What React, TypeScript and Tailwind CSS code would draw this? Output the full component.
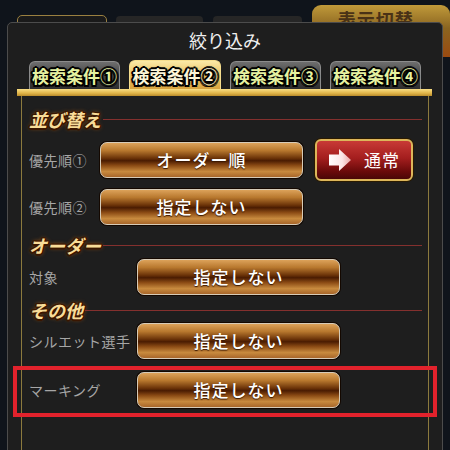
import React from "react";

const jp = "font-['Noto_Sans_CJK_JP','Noto_Sans',sans-serif]";

const tabOutline =
  "[text-shadow:-2px_0_0_#000,2px_0_0_#000,0_-2px_0_#000,0_2px_0_#000,-1.5px_-1.5px_0_#000,1.5px_-1.5px_0_#000,-1.5px_1.5px_0_#000,1.5px_1.5px_0_#000,0_0_3px_#000]";

const headOutline =
  "[text-shadow:-1.5px_0_0_#3a1600,1.5px_0_0_#3a1600,0_-1.5px_0_#3a1600,0_1.5px_0_#3a1600,-1px_-1px_0_#3a1600,1px_-1px_0_#3a1600,-1px_1px_0_#3a1600,1px_1px_0_#3a1600,0_0_4px_#c86a10]";

const tabs = ["検索条件①", "検索条件②", "検索条件③", "検索条件④"];

const GoldButton = ({ label }: { label: string }) => (
  <div className="w-[203px] h-[36px] rounded-[7px] border-[1.5px] border-[#d6cbb8] shadow-[0_0_0_1px_#140800] bg-[linear-gradient(to_bottom,#dca25a_0%,#b8782e_22%,#6a3208_45%,#4a1c02_52%,#8a4a14_66%,#c88a3e_84%,#a8662a_100%)] flex items-center justify-center">
    <span className={`${jp} font-medium text-[17px] text-white tracking-[1px] [text-shadow:0_1px_1px_#3a1800]`}>
      {label}
    </span>
  </div>
);

const SectionHead = ({ title, className }: { title: string; className?: string }) => (
  <div className={`flex items-center h-[20px] ${className ?? ""}`}>
    <span className={`${jp} italic font-bold text-[18px] text-[#f8dc98] ${headOutline} leading-none`}>
      {title}
    </span>
    <div className="flex-1 h-px bg-[#84302e] ml-[2px]" />
  </div>
);

const Row = ({
  label,
  labelW,
  children,
  className,
}: {
  label: string;
  labelW: string;
  children: React.ReactNode;
  className?: string;
}) => (
  <div className={`flex items-center ${className ?? ""}`}>
    <span className={`${jp} ${labelW} text-[14px] tracking-[0.5px] text-[#a6a6a6] shrink-0`}>
      {label}
    </span>
    {children}
  </div>
);

export default function App() {
  return (
    <div className="w-[450px] h-[450px] overflow-hidden bg-[#0f141b] relative">
      {/* tabs of the screen behind the panel */}
      <div className="flex items-start h-[22px]">
        <div className="ml-[17px] mt-[15px] w-[91px] h-[30px] rounded-t-[5px] border border-[#9a8040] bg-[#1a1a1a]" />
        <div className="ml-[9px] mt-[16px] w-[88px] h-[30px] rounded-t-[4px] bg-[#262626]" />
        <div className="ml-[10px] mt-[16px] w-[90px] h-[30px] rounded-t-[4px] bg-[#262626]" />
        <div className="ml-[10px] mt-[5px] w-[140px] h-[52px] rounded-t-[9px] bg-[linear-gradient(to_bottom,#c09a3a,#8a6420_45%,#9a4a10)] flex justify-center">
          <span className={`${jp} font-bold text-[18px] leading-none mt-[5px] ml-[-10px] text-[#4a3216] tracking-[1px]`}>
            表示切替
          </span>
        </div>
      </div>

      {/* filter panel */}
      <div className="relative z-10 ml-[7px] w-[436px] h-[440px] bg-[#1e1e1e] border border-[#4c4c4c] rounded-t-[5px]">
        <div className={`${jp} h-[34px] flex items-center justify-center text-[18px] text-[#efefef]`}>
          絞り込み
        </div>

        <div className="flex items-end gap-[9px] pl-[21px] h-[29px] mt-[3px]">
          {tabs.map((t, i) => (
            <div
              key={t}
              className={
                i === 1
                  ? "w-[92px] h-[29px] rounded-t-[6px] border border-b-0 border-[#f6de8e] bg-[linear-gradient(to_bottom,#fbe9a6,#e9c060_55%,#d8a440)] flex items-center justify-center"
                  : "w-[91px] h-[28px] rounded-t-[6px] border border-b-0 border-[#8c8c8c] bg-[linear-gradient(to_bottom,#6e6e6e,#4a4a4a_45%,#2e2e2e)] flex items-center justify-center"
              }
            >
              <span
                className={`${jp} font-bold text-[17px] leading-none ${tabOutline} ${
                  i === 1 ? "text-[#fdf6d8]" : "text-[#e6f2a0]"
                }`}
              >
                {t}
              </span>
            </div>
          ))}
        </div>

        <div className="ml-[9px] w-[415px] h-[7px] bg-[linear-gradient(to_bottom,#f8de84,#e0b448_60%,#b88a2a)]" />

        <div className="ml-[13px] w-[408px] h-[360px] border-x border-[#8c7a3e]">
          <div className="relative pl-[7px] pr-[6px] pt-[13px]">
            <SectionHead title="並び替え" />

            <Row label="優先順①" labelW="w-[71px]" className="mt-[10px]">
              <GoldButton label="オーダー順" />
              <div className="ml-[12px] w-[98px] h-[42px] rounded-[6px] border-2 border-[#dcb65a] shadow-[0_0_0_1px_#2a1a00] bg-[linear-gradient(to_bottom,#c83a36,#a41e1e_45%,#6a0a0a_80%,#4a0606)] flex items-center justify-center gap-[12px]">
                <svg width="24" height="24" viewBox="0 0 24 24">
                  <defs>
                    <linearGradient id="arr" x1="0" x2="1" y1="0" y2="0">
                      <stop offset="0" stopColor="#ffffff" />
                      <stop offset="0.6" stopColor="#fbe6e6" />
                      <stop offset="1" stopColor="#eaa6a6" />
                    </linearGradient>
                  </defs>
                  <path d="M1 6.5 H11 V1 L23 12 L11 23 V17.5 H1 Z" fill="url(#arr)" />
                </svg>
                <span className={`${jp} text-[17px] text-white tracking-[1px]`}>通常</span>
              </div>
            </Row>

            <Row label="優先順②" labelW="w-[71px]" className="mt-[8px]">
              <GoldButton label="指定しない" />
            </Row>

            <SectionHead title="オーダー" className="mt-[10px]" />

            <Row label="対象" labelW="w-[108px]" className="mt-[4px]">
              <GoldButton label="指定しない" />
            </Row>

            <SectionHead title="その他" className="mt-[5px]" />

            <Row label="シルエット選手" labelW="w-[108px]" className="mt-[3px]">
              <GoldButton label="指定しない" />
            </Row>

            <Row label="マーキング" labelW="w-[108px]" className="mt-[13px] relative">
              <GoldButton label="指定しない" />
              <div className="absolute left-[-16px] top-[-6px] w-[424px] h-[51px] border-4 border-[#e2222c] pointer-events-none" />
            </Row>
          </div>
        </div>
      </div>
    </div>
  );
}
